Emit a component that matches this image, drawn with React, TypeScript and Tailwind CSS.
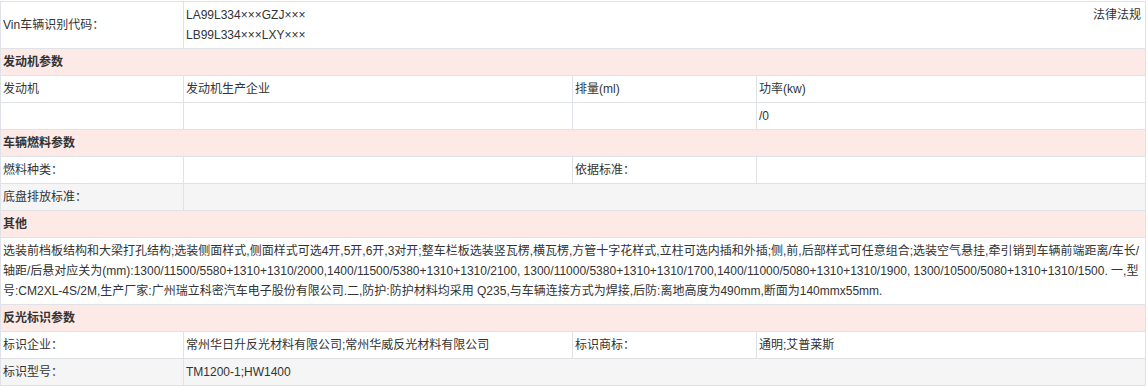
import React from "react";

const B = "border border-[#dfe3e8]";
const td = `${B} px-[2px] py-[3px] align-middle`;
const hd = `${B} px-[2px] py-[3px] bg-[#fdeae7] font-bold`;

export default function App() {
  return (
    <div
      className="bg-white pt-[1px] text-[12px] leading-[20px] text-[#333]"
      style={{ fontFamily: '"Liberation Sans", Arial, "Noto Sans CJK SC", sans-serif' }}
    >
      <table className="w-[1145px] border-collapse table-fixed">
        <colgroup>
          <col className="w-[183px]" />
          <col className="w-[389px]" />
          <col className="w-[184px]" />
          <col className="w-[389px]" />
        </colgroup>
        <tbody>
          <tr>
            <td className={td}>Vin车辆识别代码：</td>
            <td className={`${td} pr-[4px]`} colSpan={3}>
              <span className="float-right">法律法规</span>
              <div>LA99L334×××GZJ×××</div>
              <div>LB99L334×××LXY×××</div>
            </td>
          </tr>
          <tr>
            <td className={hd} colSpan={4}>发动机参数</td>
          </tr>
          <tr>
            <td className={td}>发动机</td>
            <td className={td}>发动机生产企业</td>
            <td className={td}>排量(ml)</td>
            <td className={td}>功率(kw)</td>
          </tr>
          <tr>
            <td className={td}>&nbsp;</td>
            <td className={td}></td>
            <td className={td}></td>
            <td className={td}>/0</td>
          </tr>
          <tr>
            <td className={hd} colSpan={4}>车辆燃料参数</td>
          </tr>
          <tr>
            <td className={td}>燃料种类：</td>
            <td className={td}></td>
            <td className={td}>依据标准：</td>
            <td className={td}></td>
          </tr>
          <tr className="bg-[#f5f5f5]">
            <td className={td}>底盘排放标准：</td>
            <td className={td} colSpan={3}></td>
          </tr>
          <tr>
            <td className={hd} colSpan={4}>其他</td>
          </tr>
          <tr>
            <td className={td} colSpan={4}>
              <div className="whitespace-nowrap">
                选装前档板结构和大梁打孔结构;选装侧面样式,侧面样式可选4开,5开,6开,3对开;整车栏板选装竖瓦楞,横瓦楞,方管十字花样式,立柱可选内插和外插;侧,前,后部样式可任意组合;选装空气悬挂,牵引销到车辆前端距离/车长/
              </div>
              <div className="whitespace-nowrap">
                轴距/后悬对应关为(mm):1300/11500/5580+1310+1310/2000,1400/11500/5380+1310+1310/2100, 1300/11000/5380+1310+1310/1700,1400/11000/5080+1310+1310/1900, 1300/10500/5080+1310+1310/1500. 一,型
              </div>
              <div className="whitespace-nowrap">
                号:CM2XL-4S/2M,生产厂家:广州瑞立科密汽车电子股份有限公司.二,防护:防护材料均采用 Q235,与车辆连接方式为焊接,后防:离地高度为490mm,断面为140mmx55mm.
              </div>
            </td>
          </tr>
          <tr>
            <td className={hd} colSpan={4}>反光标识参数</td>
          </tr>
          <tr>
            <td className={td}>标识企业：</td>
            <td className={td}>常州华日升反光材料有限公司;常州华威反光材料有限公司</td>
            <td className={td}>标识商标：</td>
            <td className={td}>通明;艾普莱斯</td>
          </tr>
          <tr className="bg-[#f5f5f5]">
            <td className={td}>标识型号：</td>
            <td className={td} colSpan={3}>TM1200-1;HW1400</td>
          </tr>
        </tbody>
      </table>
    </div>
  );
}
